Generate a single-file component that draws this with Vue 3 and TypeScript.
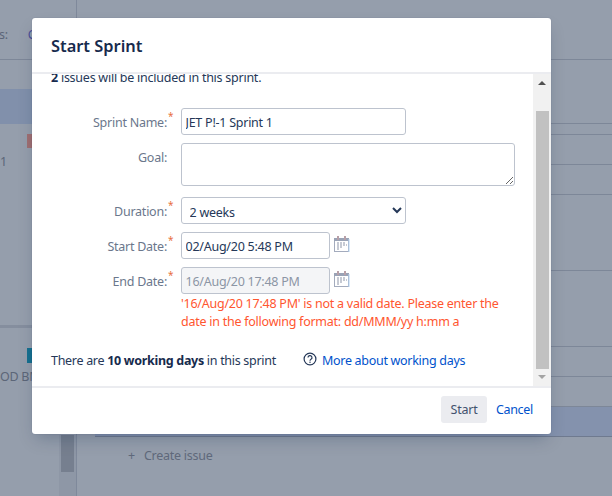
<script setup lang="ts">
const rowHeights = [64, 11, 30, 30, 76, 76, 30, 30]
</script>

<template>
  <div class="page">
    <div class="bg">
      <aside class="side">
        <div class="s-top"><span class="s-label">s:</span><span class="s-link">C</span></div>
        <div class="s-band"></div>
        <div class="s-card"><span class="red"></span><span class="one">1</span></div>
        <div class="s-card2"><span class="teal"></span><span class="dod">DOD BM</span></div>
        <div class="s-scroll"><span class="thumb"></span></div>
      </aside>
      <main class="main">
        <div class="m-top"></div>
        <div v-for="(h, i) in rowHeights" :key="i" class="m-row" :style="{ height: h + 'px' }"></div>
        <div class="m-band"></div>
        <div class="create"><span class="plus">+</span>Create issue</div>
      </main>
    </div>

    <section class="modal">
      <header class="head"><h2>Start Sprint</h2></header>
      <div class="mid">
        <div class="scroller">
          <div class="content">
            <p class="count"><b>2</b> issues will be included in this sprint.</p>
            <div class="field f1">
              <label>Sprint Name:<sup>*</sup></label>
              <input class="inp wide" value="JET P!-1 Sprint 1" />
            </div>
            <div class="field f2">
              <label>Goal:</label>
              <textarea class="inp area"></textarea>
            </div>
            <div class="field f3">
              <label>Duration:<sup>*</sup></label>
              <select class="inp wide sel"><option>2 weeks</option></select>
            </div>
            <div class="field f4">
              <label>Start Date:<sup>*</sup></label>
              <input class="inp date" value="02/Aug/20 5:48 PM" />
              <svg class="cal" viewBox="0 0 16 16" width="16" height="16">
                <rect x="0.5" y="2.5" width="14" height="13" fill="#fff" stroke="#a3abbd" />
                <rect x="0" y="2" width="15" height="3" fill="#9aa3b6" />
                <rect x="3" y="0" width="2" height="4" fill="#b8a0a8" />
                <rect x="10" y="0" width="2" height="4" fill="#b8a0a8" />
                <path d="M15 3v13" stroke="#b4d4f4" />
                <path d="M3 7h2M6 7h2M9 7h2M3 9h2M6 9h2M9 9h2M12 9h1M3 11h2M6 11h2M3 13h2" stroke="#8d95a8" />
              </svg>
            </div>
            <div class="field f5">
              <label>End Date:<sup>*</sup></label>
              <input class="inp date" disabled value="16/Aug/20 17:48 PM" />
              <svg class="cal" viewBox="0 0 16 16" width="16" height="16">
                <rect x="0.5" y="2.5" width="14" height="13" fill="#fff" stroke="#a3abbd" />
                <rect x="0" y="2" width="15" height="3" fill="#9aa3b6" />
                <rect x="3" y="0" width="2" height="4" fill="#b8a0a8" />
                <rect x="10" y="0" width="2" height="4" fill="#b8a0a8" />
                <path d="M15 3v13" stroke="#b4d4f4" />
                <path d="M3 7h2M6 7h2M9 7h2M3 9h2M6 9h2M9 9h2M12 9h1M3 11h2M6 11h2M3 13h2" stroke="#8d95a8" />
              </svg>
            </div>
            <p class="err">'16/Aug/20 17:48 PM' is not a valid date. Please enter the<br />date in the following format: dd/MMM/yy h:mm a</p>
            <div class="days">
              <span class="days-t">There are <b>10 working days</b> in this sprint</span>
              <svg class="q" viewBox="0 0 14 14" width="14" height="14">
                <circle cx="7" cy="7" r="5.9" fill="none" stroke="#253858" stroke-width="1.2" />
                <path d="M5 5.6a2 2 0 1 1 3 1.7c-.7.4-1 .7-1 1.5" fill="none" stroke="#253858" stroke-width="1.2" />
                <rect x="6.4" y="9.6" width="1.2" height="1.3" fill="#253858" />
              </svg>
              <a class="link">More about working days</a>
            </div>
          </div>
        </div>
        <div class="bar">
          <span class="up"></span>
          <span class="bar-thumb"></span>
          <span class="down"></span>
        </div>
      </div>
      <footer class="foot">
        <button class="start">Start</button>
        <a class="link">Cancel</a>
      </footer>
    </section>
  </div>
</template>

<style>
html, body { margin: 0; overflow: hidden; }
</style>

<style scoped>
.page {
  position: relative;
  width: 612px;
  height: 496px;
  overflow: hidden;
  font-family: "Noto Sans", "Open Sans", sans-serif;
  font-size: 12.5px;
  letter-spacing: -0.25px;
  color: #253858;
}
.bg {
  display: flex;
  width: 612px;
  height: 496px;
  background: #959eac;
}
.side {
  width: 76px;
  height: 496px;
  border-right: 1px solid #7f899b;
  display: flex;
  flex-direction: column;
  flex: none;
}
.s-top {
  height: 60px;
  border-bottom: 1px solid #7d8798;
  padding-top: 26px;
  box-sizing: border-box;
  display: flex;
  gap: 20px;
  color: #5c6678;
  margin-left: -1px;
}
.s-link { color: #4a4f96; }
.s-band { height: 35px; margin-top: 29px; background: #8190ab; flex: none; }
.s-card {
  height: 204px;
  flex: none;
  position: relative;
  border-bottom: 3px solid #858e9e;
  box-sizing: border-box;
}
.red { position: absolute; left: 27px; top: 10px; width: 50px; height: 14px; background: #a06f72; }
.one { position: absolute; left: 0; top: 29px; color: #5c6678; }
.s-card2 { height: 107px; flex: none; position: relative; }
.teal { position: absolute; left: 27px; top: 20px; width: 50px; height: 15px; background: #16708f; }
.dod { position: absolute; left: -9px; top: 40px; color: #5c6678; white-space: nowrap; }
.s-scroll { flex: 1; margin-left: 59px; background: #8e97a6; }
.thumb { display: block; width: 13px; margin-left: 2px; height: 37px; background: #767f8f; }
.main { flex: 1; display: flex; flex-direction: column; }
.m-top { height: 59px; border-bottom: 1px solid #7d8798; }
.m-row { border-bottom: 1px solid #7d8798; box-sizing: border-box; }
.m-band {
  height: 29px;
  margin-left: 18px;
  background: #8492ad;
  border-bottom: 1px solid #6f7a8f;
}
.create { margin: 9px 0 0 51px; color: #5f697b; line-height: 20px; }
.plus { margin-right: 9px; }

.modal {
  position: absolute;
  left: 32px;
  top: 18px;
  width: 519px;
  height: 416px;
  background: #fff;
  border-radius: 3px;
  box-shadow: 0 8px 16px -4px rgba(9, 30, 66, 0.25), 0 0 1px rgba(9, 30, 66, 0.31);
  display: flex;
  flex-direction: column;
  overflow: hidden;
}
.head {
  height: 56px;
  flex: none;
  border-bottom: 2px solid #ebecf0;
  box-sizing: border-box;
  padding: 16px 19px 0;
}
.head h2 {
  margin: 0;
  font-size: 16.4px;
  font-weight: 600;
  letter-spacing: 0;
  line-height: 24px;
  color: #172b4d;
}
.mid { flex: 1; display: flex; min-height: 0; overflow: hidden; }
.scroller { flex: 1; overflow: hidden; }
.content { margin-top: -6px; padding-left: 19px; position: relative; }
.count { margin: 0; height: 20px; line-height: 20px; }
.count b { color: #172b4d; }
.field { display: flex; align-items: flex-start; margin-left: -19px; }
.field label {
  width: 135px;
  text-align: right;
  line-height: 20px;
  padding-top: 5px;
  color: #6b778c;
  position: relative;
  flex: none;
  margin-right: 14px;
}
sup {
  position: absolute;
  left: 136px;
  top: 3px;
  font-size: 10px;
  line-height: 10px;
  color: #e8703f;
}
.f1 { margin-top: 20px; }
.f2 { margin-top: 8px; }
.f3 { margin-top: 11px; }
.f4 { margin-top: 8px; }
.f5 { margin-top: 8px; }
.inp {
  box-sizing: border-box;
  height: 27px;
  border: 1px solid #bdc3ce;
  border-radius: 3px;
  background: #fff;
  font: inherit;
  letter-spacing: inherit;
  color: #253858;
  padding: 1px 4px 0 3.5px;
  margin: 0;
  outline: none;
  display: block;
}
.wide { width: 225px; }
.area { width: 334px; height: 43px; }
.sel { padding-top: 3px; }
.date { width: 149px; }
.date:disabled { background: #f4f5f7; color: #8c95a5; }
.cal { margin: 4px 0 0 4px; flex: none; }
.err {
  margin: 1px 0 0 130px;
  line-height: 18px;
  color: #ff5630;
}
.days {
  display: flex;
  align-items: center;
  margin-top: 19px;
  height: 20px;
  position: relative;
  letter-spacing: -0.3px;
}
.days-t { width: 252px; flex: none; }
.days b { color: #172b4d; }
.q { flex: none; margin-top: -3px; margin-right: 5px; }
.link { color: #0052cc; }
.bar {
  width: 18px;
  flex: none;
  background: #f1f1f1;
  position: relative;
  display: flex;
  flex-direction: column;
  align-items: center;
}
.up {
  width: 0; height: 0;
  border-left: 4px solid transparent;
  border-right: 4px solid transparent;
  border-bottom: 4px solid #505050;
  margin-top: 7px;
}
.bar-thumb {
  width: 13px;
  height: 258px;
  margin-top: 26px;
  background: #c1c1c1;
}
.down {
  width: 0; height: 0;
  border-left: 4px solid transparent;
  border-right: 4px solid transparent;
  border-top: 4px solid #a3a3a3;
  margin-top: 6px;
}
.foot {
  height: 48px;
  flex: none;
  border-top: 2px solid #ebecf0;
  box-sizing: border-box;
  display: flex;
  align-items: flex-start;
  justify-content: flex-end;
  padding: 8px 19px 0 0;
  gap: 9px;
}
.start {
  width: 46px;
  height: 27px;
  border: 0;
  border-radius: 3px;
  background: #ebecf0;
  color: #42526e;
  font: inherit;
  letter-spacing: inherit;
  padding: 0;
}
.foot .link { line-height: 27px; width: 36px; white-space: nowrap; letter-spacing: -0.35px; }
</style>
